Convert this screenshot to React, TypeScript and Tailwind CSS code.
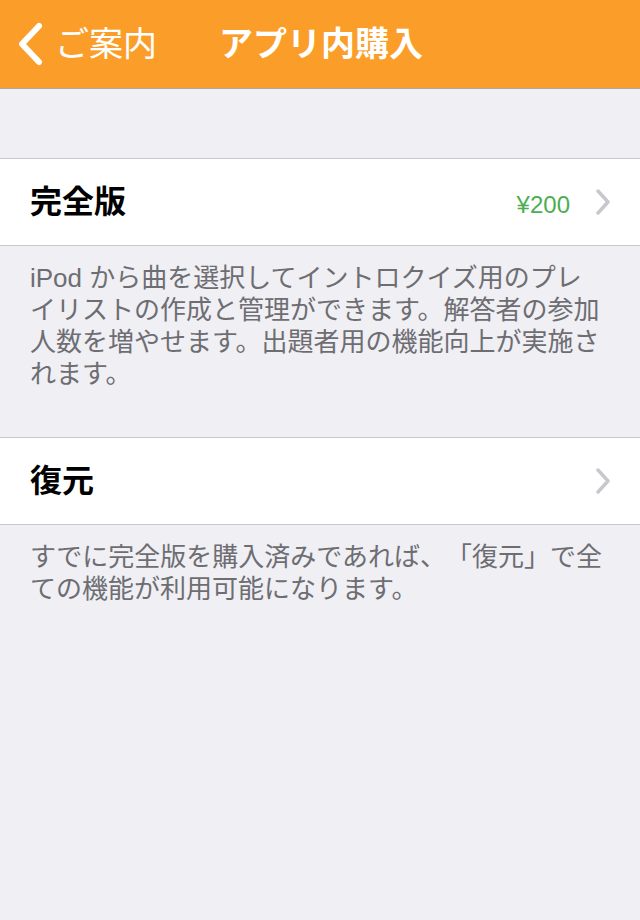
const FONT = "font-['Liberation_Sans','Noto_Sans_CJK_JP',sans-serif]";

function Chevron() {
  return (
    <svg width="14" height="26" viewBox="0 0 14 26" className="shrink-0">
      <path d="M2 2 L12 13 L2 24" fill="none" stroke="#c7c7cc" strokeWidth="3.4" strokeLinecap="round" strokeLinejoin="round" />
    </svg>
  );
}

function Row({ title, detail }: { title: string; detail?: string }) {
  return (
    <div className="bg-white border-y border-[#c8c7cc] h-[88px] flex items-center pl-[30px] pr-[30px]">
      <span className="text-[32px] font-bold text-black leading-none flex-1">{title}</span>
      {detail && <span className="text-[24px] text-[#4cae50] mr-[26px] mt-[6px]">{detail}</span>}
      <Chevron />
    </div>
  );
}

function Footer({ lines }: { lines: string[] }) {
  return (
    <div className="pt-[16px] px-[30px] text-[26px] leading-[32px] text-[#6d6d72] [text-spacing-trim:space-all]">
      {lines.map((l, i) => (
        <div key={i} className="whitespace-nowrap">{l}</div>
      ))}
    </div>
  );
}

export default function App() {
  return (
    <div className={`${FONT} w-[640px] h-[920px] bg-[#efeff4] flex flex-col overflow-hidden`}>
      {/* Nav bar */}
      <div className="h-[89px] bg-[#fb9e29] border-b border-[#a9a9a9] flex items-center shrink-0">
        <div className="flex items-center pl-[17px]">
          <svg width="28" height="44" viewBox="0 0 28 44">
            <path d="M22 4 L5 22 L22 40" fill="none" stroke="white" strokeWidth="6" strokeLinecap="round" strokeLinejoin="round" />
          </svg>
          <span className="text-white text-[34px] ml-[10px] leading-none">ご案内</span>
        </div>
        <span className="text-white text-[34px] font-bold ml-[62px] leading-none">アプリ内購入</span>
      </div>

      <div className="h-[69px]" />
      <Row title="完全版" detail="¥200" />
      <Footer
        lines={[
          'iPod から曲を選択してイントロクイズ用のプレ',
          'イリストの作成と管理ができます。解答者の参加',
          '人数を増やせます。出題者用の機能向上が実施さ',
          'れます。',
        ]}
      />
      <div className="h-[47px]" />
      <Row title="復元" />
      <Footer
        lines={[
          'すでに完全版を購入済みであれば、「復元」で全',
          'ての機能が利用可能になります。',
        ]}
      />
    </div>
  );
}
